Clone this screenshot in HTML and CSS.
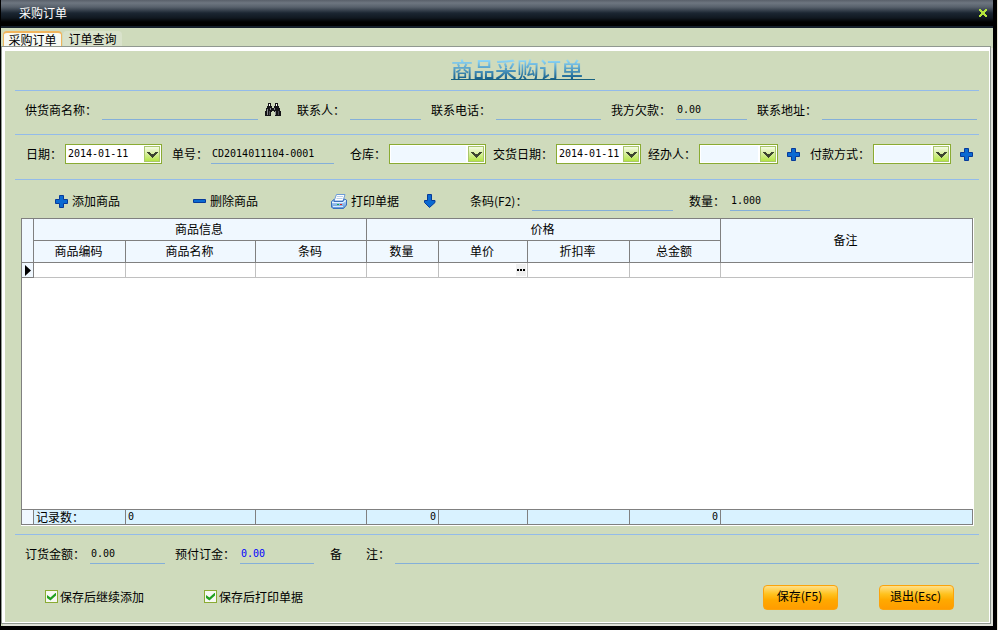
FILE: index.html
```html
<!DOCTYPE html>
<html lang="zh-CN">
<head>
  <meta charset="UTF-8" />
  <title>采购订单</title>
  <meta name="viewport" content="width=device-width, initial-scale=1" />
  <link rel="stylesheet" href="styles.css">
</head>
<body>

  <svg class="defs" aria-hidden="true">
    <linearGradient id="printerBody" x1="0" y1="0" x2="0" y2="1">
      <stop offset="0" stop-color="#cfe4fa" />
      <stop offset="1" stop-color="#5b95dc" />
    </linearGradient>
    <symbol id="plus" viewBox="0 0 13 13">
      <path d="M4.5 .5h4v4h4v4h-4v4h-4v-4h-4v-4h4z" fill="#0a6ad2" stroke="#063a9a" />
    </symbol>
    <symbol id="minus" viewBox="0 0 13 13">
      <path d="M.5 4.500h12v3H.5z" fill="#0a6ad2" stroke="#063a9a" />
    </symbol>
    <symbol id="chevron" viewBox="0 0 11 7">
      <path d="M0 1h3v1h1v1h3V2h1V1h3v1h-1v1H9v1H8v1H7v1H6v1H5V6H4V5H3V4H2V3H1V2H0z" fill="#3c4430" />
    </symbol>
  </svg>

  <div class="window">
    <header class="titlebar">
      <h1>采购订单</h1>
      <button class="close" aria-label="关闭">
        <svg width="8" height="8" viewBox="0 0 8 8"><path d="M0 0h2v1h1v1h2V1h1V0h2v2H7v1H6v2h1v1h1v2H6V7H5V6H3v1H2v1H0V6h1V5h1V3H1V2H0z" fill="#b4e43c" /></svg>
      </button>
    </header>

    <nav class="tabs">
      <button class="tab active">采购订单</button>
      <button class="tab">订单查询</button>
    </nav>

    <main class="panel">
      <div class="heading"><h2>商品采购订单</h2></div>

      <div class="row supplier">
        <div class="field">
          <label for="supplier">供货商名称：</label>
          <input type="text" id="supplier" class="line" />
          <button class="icon" aria-label="查找">
            <svg width="16" height="14" viewBox="0 0 16 14">
              <path d="M3 0h3v3h1v2h2V3h1V0h3v3h1v2h1v3h1v5h-6V9H9V8H7v1H6v4H0V8h1V5h1V3h1z" fill="#151518" />
              <path d="M4 1h1v2H4zM11 1h1v2h-1z" fill="#fff" />
              <path d="M2 6h1v6H2zM10 8h1v4h-1zM5 5h1v2H5zM9 5h1v2H9z" fill="#8a8a90" />
              <path d="M4 8h1v4H4zM13 8h1v4h-1z" fill="#4c4c54" />
            </svg>
          </button>
        </div>
        <div class="field">
          <label for="contact">联系人：</label>
          <input type="text" id="contact" class="line" />
        </div>
        <div class="field">
          <label for="phone">联系电话：</label>
          <input type="text" id="phone" class="line" />
        </div>
        <div class="field">
          <label for="debt">我方欠款：</label>
          <input type="text" id="debt" class="line" value="0.00" />
        </div>
        <div class="field last">
          <label for="address">联系地址：</label>
          <input type="text" id="address" class="line" />
        </div>
      </div>

      <div class="row order">
        <div class="field">
          <label for="date">日期：</label>
          <div class="combo date">
            <input type="text" id="date" value="2014-01-11" />
            <button class="drop" aria-label="选择日期"><svg width="11" height="7"><use href="#chevron" /></svg></button>
          </div>
        </div>
        <div class="field loose">
          <label for="number">单号：</label>
          <input type="text" id="number" class="line" value="CD2014011104-0001" />
        </div>
        <div class="field tight">
          <label for="depot">仓库：</label>
          <div class="combo">
            <select id="depot"><option></option></select>
            <span class="drop"><svg width="11" height="7"><use href="#chevron" /></svg></span>
          </div>
        </div>
        <div class="field tight">
          <label for="delivery">交货日期：</label>
          <div class="combo date">
            <input type="text" id="delivery" value="2014-01-11" />
            <button class="drop" aria-label="选择日期"><svg width="11" height="7"><use href="#chevron" /></svg></button>
          </div>
        </div>
        <div class="field">
          <label for="handler">经办人：</label>
          <div class="combo">
            <select id="handler"><option></option></select>
            <span class="drop"><svg width="11" height="7"><use href="#chevron" /></svg></span>
          </div>
          <button class="icon" aria-label="添加经办人"><svg width="13" height="13"><use href="#plus" /></svg></button>
        </div>
        <div class="field last">
          <label for="payment">付款方式：</label>
          <div class="combo">
            <select id="payment"><option></option></select>
            <span class="drop"><svg width="11" height="7"><use href="#chevron" /></svg></span>
          </div>
          <button class="icon" aria-label="添加付款方式"><svg width="13" height="13"><use href="#plus" /></svg></button>
        </div>
      </div>

      <div class="row tools">
        <button class="tool"><svg width="13" height="13"><use href="#plus" /></svg>添加商品</button>
        <button class="tool"><svg width="13" height="13"><use href="#minus" /></svg>删除商品</button>
        <button class="tool">
          <svg width="16" height="15" viewBox="0 0 16 15">
            <path d="M5.500.5H14L12 7H3z" fill="#fff" stroke="#6b9ad6" />
            <path d="M6 2.500h6M5.500 4.500h6" stroke="#b9cfe8" />
            <path d="M.5 7.500L3 5.500v2h9l1-2.500 2.500 1v5l-3 3.500H2l-1.500-1.500z" fill="url(#printerBody)" stroke="#3a6fbd" />
            <path d="M1 8.500h11l3-2" fill="none" stroke="#e9f4ff" />
            <path d="M2 12.500h10" stroke="#dcebfb" />
            <path d="M6 10h2v1H6z" fill="#19a84a" />
            <path d="M9 10h2v1H9z" fill="#e02323" />
          </svg>打印单据
        </button>
        <button class="icon" aria-label="更多打印">
          <svg width="12" height="14" viewBox="0 0 12 14"><path d="M3.500.5h4v6h3.500v2L5.500 13.500 .5 8.500v-2h3z" fill="#0a6ad2" stroke="#063a9a" /></svg>
        </button>
        <div class="field loose">
          <label for="barcode">条码(F2)：</label>
          <input type="text" id="barcode" class="line" />
        </div>
        <div class="field last">
          <label for="qty">数量：</label>
          <input type="text" id="qty" class="line" value="1.000" />
        </div>
      </div>

      <div class="grid">
        <table>
          <colgroup>
            <col class="c-mark"><col class="c-code"><col class="c-name"><col class="c-bar"><col class="c-qty">
            <col class="c-price"><col class="c-rate"><col class="c-total"><col class="c-note">
          </colgroup>
          <thead>
            <tr>
              <th rowspan="2"></th>
              <th colspan="3">商品信息</th>
              <th colspan="4">价格</th>
              <th rowspan="2">备注</th>
            </tr>
            <tr>
              <th>商品编码</th>
              <th>商品名称</th>
              <th>条码</th>
              <th>数量</th>
              <th>单价</th>
              <th>折扣率</th>
              <th>总金额</th>
            </tr>
          </thead>
          <tbody>
            <tr class="item">
              <td class="mark"><svg width="6" height="11" viewBox="0 0 6 11"><path d="M0 0l6 5.500L0 11z" /></svg></td>
              <td></td>
              <td></td>
              <td></td>
              <td></td>
              <td><button class="more" aria-label="选择单价"><svg width="8" height="2" viewBox="0 0 8 2"><path d="M0 0h2v2H0zM3 0h2v2H3zM6 0h2v2H6z" /></svg></button></td>
              <td></td>
              <td></td>
              <td></td>
            </tr>
            <tr class="empty"><td colspan="9"></td></tr>
          </tbody>
          <tfoot>
            <tr>
              <td class="mark"></td>
              <td class="count">记录数：</td>
              <td>0</td>
              <td></td>
              <td class="num">0</td>
              <td></td>
              <td></td>
              <td class="num">0</td>
              <td></td>
            </tr>
          </tfoot>
        </table>
      </div>

      <div class="row totals">
        <div class="field">
          <label for="amount">订货金额：</label>
          <input type="text" id="amount" class="line" value="0.00" />
        </div>
        <div class="field loose">
          <label for="deposit">预付订金：</label>
          <input type="text" id="deposit" class="line blue" value="0.00" />
        </div>
        <div class="field last">
          <label for="remark">备　　注：</label>
          <input type="text" id="remark" class="line" />
        </div>
      </div>

      <div class="actions">
        <label class="check"><input type="checkbox" checked />保存后继续添加</label>
        <label class="check"><input type="checkbox" checked />保存后打印单据</label>
        <div class="buttons">
          <button class="btn">保存(F5)</button>
          <button class="btn">退出(Esc)</button>
        </div>
      </div>
    </main>
  </div>

</body>
</html>
```
FILE: styles.css
```css
* { box-sizing: border-box; }
body {
  margin: 0;
  padding-right: 1px;
  background: #ece9d8;
  font: 12px/16px "Noto Sans CJK SC", sans-serif;
  color: #000;
}
button, input, select { font: inherit; color: inherit; margin: 0; }
button { padding: 0; border: none; background: none; cursor: pointer; }
h1, h2 { margin: 0; font-weight: normal; }
svg { display: block; flex: none; }
.defs { position: absolute; width: 0; height: 0; }

.window {
  display: flex;
  flex-direction: column;
  min-height: 100vh;
  background: #cfdbbc;
  border: solid #000;
  border-width: 0 4px 4px 1px;
}

.titlebar {
  display: flex;
  justify-content: space-between;
  align-items: center;
  height: 28px;
  padding: 0 6px 2px 18px;
  background: linear-gradient(#59606a, #6e7680 3px, #58616c 7px, #1b2632 13px, #101820 18px, #000 22px, #000 26px, #16202c 26px);
}
.titlebar h1 { font-size: 12px; color: #fff; }

.tabs {
  display: flex;
  gap: 1px;
  height: 18px;
  padding: 3px 2px 0;
}
.tab {
  width: 59px;
  line-height: 15px;
  background: #d9e2cb;
  border-radius: 4px 4px 0 0;
}
.tab.active {
  background: #f7f9f3;
  border: solid #f0b45c;
  border-width: 2px 1px 0;
  line-height: 12px;
}

.panel {
  flex: 1;
  display: flex;
  flex-direction: column;
  margin: 0 2px 2px 0;
  padding: 0 11px 0 10px;
  border: 1px solid #909890;
  box-shadow: inset 3px 4px #fff, inset -1px -1px #fff, 2px 2px #dfe1d8;
}

.heading {
  margin-top: 4px;
  height: 40px;
  padding: 6px 0 0 52px;
  margin-left: 3px;
  border-bottom: 1px solid #93bbea;
  text-align: center;
}
.heading h2 {
  display: inline-block;
  padding-right: 12px;
  font-size: 22px;
  font-weight: 500;
  line-height: 22px;
  color: transparent;
  background: linear-gradient(#8fd8fa 3px, #1b6590 21px);
  -webkit-background-clip: text;
  background-clip: text;
  border-bottom: 1px solid #17607f;
}

.row {
  display: grid;
  align-items: center;
  margin-left: 3px;
  padding-left: 10px;
  border-bottom: 1px solid #93bbea;
}
.supplier {
  grid-template-columns: 272fr 134fr 180fr 146fr 220fr;
  padding-top: 9px;
  padding-bottom: 14px;
  padding-right: 2px;
}
.order {
  grid-template-columns: 146fr 178fr 143fr 155fr 162fr 163fr;
  padding-top: 9px;
  padding-bottom: 15px;
  padding-right: 6px;
  padding-left: 11px;
}
.tools {
  grid-template-columns: 138fr 138fr 93fr 46fr 219fr 121fr;
  padding: 11px 169px 7px 40px;
  border: none;
}
.totals {
  grid-template-columns: 150fr 155fr 649fr;
  padding-top: 9px;
  border: none;
  border-top: 1px solid #93bbea;
}

.field {
  display: flex;
  align-items: center;
  gap: 5px;
  min-width: 0;
  height: 20px;
  padding-right: 10px;
}
.field.tight { padding-right: 7px; }
.field.loose { padding-right: 16px; }
.field.last { padding-right: 0; }
.field label { flex: none; }
.order .field { gap: 3px; }
.supplier .icon { margin: 0 6px 0 2px; }
.order .icon { margin-left: 6px; }

.line {
  flex: 1;
  min-width: 0;
  height: 20px;
  padding: 0 1px;
  border: none;
  border-bottom: 1px solid #84afd9;
  background: none;
  outline: none;
  font: 10px/16px "DejaVu Sans Mono", monospace;
}
.line.blue { color: #00f; }

.combo {
  position: relative;
  flex: 1;
  min-width: 0;
  display: flex;
  height: 20px;
  padding: 1px;
  border: 1px solid #8aab33;
  background: #fff;
}
.combo input, .combo select {
  flex: 1;
  min-width: 0;
  border: none;
  outline: none;
  padding: 0 1px;
  background: #fff;
  font: 10px/16px "DejaVu Sans Mono", monospace;
}
.combo select {
  appearance: none;
  background: linear-gradient(to left, #fff 18px, #f0f8ff 18px);
}
.drop {
  display: flex;
  align-items: center;
  justify-content: center;
  width: 16px;
  height: 16px;
  border: 1px solid #a9c66c;
  background: linear-gradient(#f4fbe4, #d6ee9c 50%, #b4e644);
}
.combo select + .drop {
  position: absolute;
  top: 1px;
  right: 1px;
  pointer-events: none;
}

.icon { justify-self: start; }
.tool {
  display: flex;
  align-items: center;
  gap: 4px;
  justify-self: start;
}

.grid {
  flex: 1;
  display: grid;
  margin: 0 5px 8px 9px;
  padding: 0 1px 1px 0;
  background: #fff;
}
.grid table {
  width: 100%;
  height: 100%;
  table-layout: fixed;
  border-collapse: collapse;
  border: 1px solid #808080;
  border-right-color: #fff;
}
.c-mark { width: 12px; }
.c-code { width: 92px; }
.c-name { width: 130px; }
.c-bar { width: 111px; }
.c-qty { width: 72px; }
.c-price { width: 89px; }
.c-rate { width: 102px; }
.c-total { width: 91px; }
.c-note { width: 252px; }
.grid th, .grid td { padding: 0; }
.grid th {
  height: 22px;
  padding: 0 2px 2px 0;
  font-weight: normal;
  background: #f0f8ff;
  border: 1px solid #808080;
}
.grid .item td {
  height: 15px;
  line-height: 12px;
  border: 1px solid #c0c0c0;
}
.grid .mark { background: #f0f8ff; }
.grid .item .mark { border-color: #808080; padding-left: 3px; }
.more {
  display: flex;
  align-items: center;
  justify-content: center;
  width: 10px;
  height: 12px;
  margin-left: auto;
  margin-right: 1px;
  background: #f0f0f0;
}
.grid tfoot td {
  height: 15px;
  padding: 0 2px;
  line-height: 14px;
  background: #d9f2ff;
  border: 1px solid #808080;
  font-family: "DejaVu Sans Mono", monospace;
  font-size: 10px;
}
.grid tfoot .mark { background: #f0f8ff; }
.grid tfoot .count { font: 12px/14px "Noto Sans CJK SC", sans-serif; }
.grid tfoot .num { text-align: right; }

.actions {
  display: flex;
  align-items: center;
  padding: 21px 10px 13px 33px;
}
.check {
  display: flex;
  align-items: center;
  gap: 2px;
  width: 159px;
  padding-bottom: 2px;
}
.check input {
  appearance: none;
  width: 13px;
  height: 13px;
  border: 1px solid #8aab33;
  background: #f6f8f2;
  display: grid;
  place-items: center;
}
.check input:checked::before {
  content: "";
  width: 9px;
  height: 8px;
  background: #21a121;
  clip-path: polygon(0 30%, 38% 62%, 100% 0, 100% 36%, 38% 100%, 0 68%);
}
.buttons {
  display: flex;
  gap: 41px;
  margin-left: auto;
  padding-right: 15px;
}
.btn {
  width: 75px;
  height: 25px;
  padding: 0 2px 4px 0;
  border: 1px solid #fba30c;
  border-radius: 4px;
  background: linear-gradient(#ffe08a, #ffc21e 35%, #ffaa00 60%, #ff9c00);
}
```
